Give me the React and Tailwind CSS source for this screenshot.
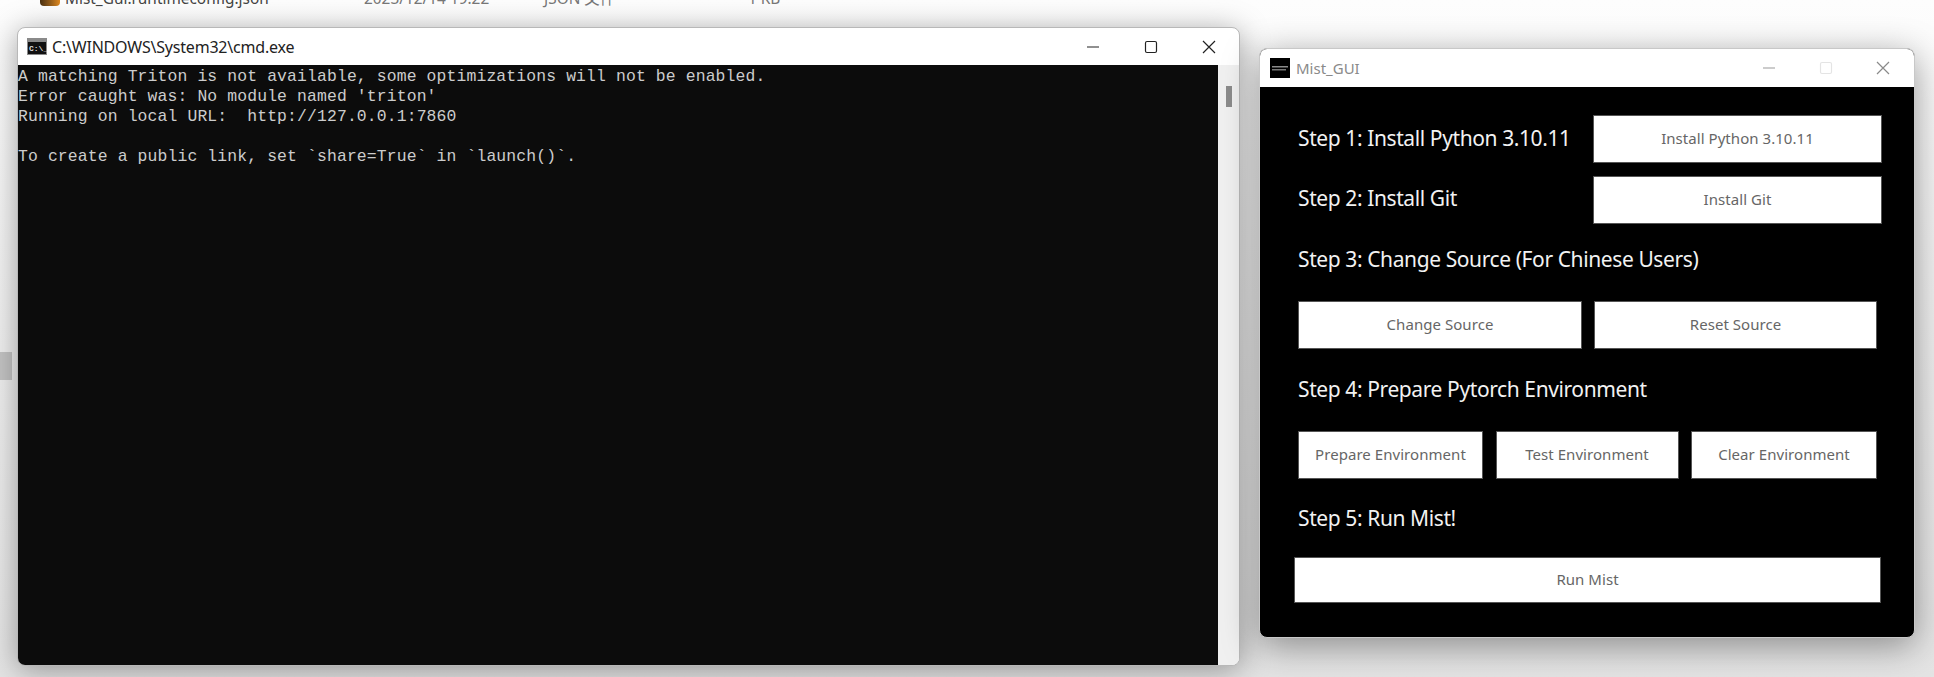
import React from 'react';

const uiFont = { fontFamily: '"Noto Sans", "Noto Sans CJK SC", sans-serif' };

const CmdIcon = () => (
  <svg width="20" height="17" viewBox="0 0 20 17" className="shrink-0">
    <rect width="20" height="17" fill="#8a8a8a" />
    <rect x="1" y="4" width="18" height="12" fill="#111" />
    <text x="2" y="13" fontSize="8" fontWeight="700" fill="#ddd" fontFamily="Liberation Mono, monospace">C:\_</text>
  </svg>
);

const MistIcon = () => (
  <svg width="20" height="20" viewBox="0 0 20 20" className="shrink-0">
    <rect width="20" height="20" fill="#000" />
    <rect x="2" y="8" width="16" height="1.5" fill="#8a8a8a" />
    <rect x="2" y="11" width="14" height="1.5" fill="#777" />
  </svg>
);

const MinIcon = ({ color }) => (
  <svg width="14" height="14" viewBox="0 0 14 14"><path d="M1 7h12" stroke={color} strokeWidth="1.2" /></svg>
);
const MaxIcon = ({ color }) => (
  <svg width="14" height="14" viewBox="0 0 14 14"><rect x="1.5" y="1.5" width="11" height="11" rx="1.5" fill="none" stroke={color} strokeWidth="1.2" /></svg>
);
const CloseIcon = ({ color }) => (
  <svg width="14" height="14" viewBox="0 0 14 14"><path d="M1 1l12 12M13 1L1 13" stroke={color} strokeWidth="1.2" /></svg>
);

const termLines = [
  'A matching Triton is not available, some optimizations will not be enabled.',
  "Error caught was: No module named 'triton'",
  'Running on local URL:  http://127.0.0.1:7860',
  '',
  'To create a public link, set `share=True` in `launch()`.',
];

const Btn = ({ className, children }) => (
  <button className={`bg-white border border-[#555] text-[#666] text-[15px] tracking-[0.05px] pb-[1px] flex items-center justify-center ${className}`}>
    {children}
  </button>
);

const Label = ({ className, children }) => (
  <div className={`text-[#f2f2f2] text-[21px] tracking-[-0.4px] leading-none whitespace-nowrap flex items-center ${className}`}>
    {children}
  </div>
);

const App = () => {
  return (
    <div className="relative w-[1934px] h-[677px] overflow-hidden bg-gradient-to-b from-[#fdfdfd] to-[#e4e4e4]">
      {/* explorer behind the windows */}
      <div className="absolute left-0 top-[-11px] w-full h-[20px] text-[#444] text-[15.4px] leading-[20px]" style={uiFont}>
        <span className="absolute left-[40px] top-[0px] w-[20px] h-[17px] rounded-sm bg-gradient-to-r from-[#4a3010] to-[#e08a20]" />
        <span className="absolute left-[65px] whitespace-nowrap">Mist_Gui.runtimeconfig.json</span>
        <span className="absolute left-[364px] text-[#777] whitespace-nowrap">2023/12/14 19:22</span>
        <span className="absolute left-[544px] text-[#777] whitespace-nowrap">JSON 文件</span>
        <span className="absolute left-[748px] text-[#777] whitespace-nowrap">1 KB</span>
      </div>
      <div className="absolute left-0 top-[352px] w-[12px] h-[28px] bg-[#c4c4c4]" />

      {/* cmd window */}
      <div className="absolute left-[17px] top-[27px] w-[1223px] h-[639px] rounded-lg overflow-hidden border border-[#b8b8b8] bg-white shadow-[0_4px_30px_rgba(0,0,0,0.36)] flex flex-col">
        <div className="h-[37px] shrink-0 flex items-center pl-[9px]" style={uiFont}>
          <CmdIcon />
          <span className="ml-[5px] text-[16px] tracking-[-0.2px] text-[#222]">C:\WINDOWS\System32\cmd.exe</span>
          <div className="ml-auto flex items-center gap-[44px] pr-[23px]">
            <MinIcon color="#222" />
            <MaxIcon color="#222" />
            <CloseIcon color="#222" />
          </div>
        </div>
        <div className="flex-1 flex min-h-0">
          <div className="flex-1 bg-[#0c0c0c] text-[#cccccc] text-[16.4px] tracking-[0.13px] leading-[20px] pt-[2px] whitespace-pre" style={{ fontFamily: '"Liberation Mono", monospace' }}>
            {termLines.map((line, i) => (
              <div key={i} className="h-[20px]">{line}</div>
            ))}
          </div>
          <div className="w-[21px] bg-[#f0f0f0] pt-[21px] flex justify-center">
            <div className="w-[6px] h-[21px] bg-[#8b8b8b]" />
          </div>
        </div>
      </div>

      {/* Mist_GUI window */}
      <div className="absolute left-[1259px] top-[48px] w-[656px] h-[590px] rounded-lg overflow-hidden border border-[#c8c8c8] bg-black shadow-[0_8px_36px_rgba(0,0,0,0.4)] flex flex-col" style={uiFont}>
        <div className="h-[38px] shrink-0 bg-white flex items-center pl-[10px]">
          <MistIcon />
          <span className="ml-[6px] text-[15px] text-[#8a8a8a]">Mist_GUI</span>
          <div className="ml-auto flex items-center gap-[43px] pr-[24px]">
            <MinIcon color="#9a9a9a" />
            <MaxIcon color="#e4e4e4" />
            <CloseIcon color="#8a8a8a" />
          </div>
        </div>
        <div className="flex-1 pt-[28px] pl-[38px] pr-[32px]">
          <div className="flex h-[48px]">
            <Label className="w-[296px] pb-[2px]">Step 1: Install Python 3.10.11</Label>
            <Btn className="w-[290px]">Install Python 3.10.11</Btn>
          </div>
          <div className="flex h-[48px] mt-[13px]">
            <Label className="w-[296px] pb-[4px]">Step 2: Install Git</Label>
            <Btn className="w-[290px]">Install Git</Btn>
          </div>
          <Label className="h-[47px] mt-[12px]">Step 3: Change Source (For Chinese Users)</Label>
          <div className="flex justify-between mt-[18px] w-[579px] h-[48px]">
            <Btn className="w-[284px]">Change Source</Btn>
            <Btn className="w-[283px]">Reset Source</Btn>
          </div>
          <Label className="h-[47px] mt-[17px]">Step 4: Prepare Pytorch Environment</Label>
          <div className="flex justify-between mt-[18px] w-[579px] h-[48px]">
            <Btn className="w-[185px]">Prepare Environment</Btn>
            <Btn className="w-[183px]">Test Environment</Btn>
            <Btn className="w-[186px]">Clear Environment</Btn>
          </div>
          <Label className="h-[47px] mt-[16px]">Step 5: Run Mist!</Label>
          <Btn className="w-[587px] h-[46px] mt-[15px] ml-[-4px]">Run Mist</Btn>
        </div>
      </div>
    </div>
  );
};

export default App;
